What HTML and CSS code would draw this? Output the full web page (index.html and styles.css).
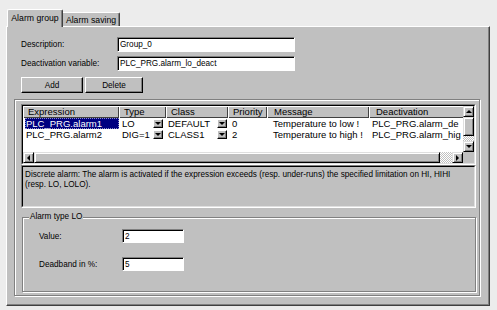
FILE: index.html
```html
<!DOCTYPE html>
<html>
<head>
<meta charset="utf-8">
<link rel="stylesheet" href="styles.css">
</head>
<body>
<div class="window">
  <div class="tabs">
    <div class="tab active">Alarm group</div>
    <div class="tab inactive">Alarm saving</div>
  </div>
  <div class="panel">
    <div class="form">
      <span class="label">Description:</span>
      <input class="field wide" value="Group_0">
      <span class="label">Deactivation variable:</span>
      <input class="field wide" value="PLC_PRG.alarm_lo_deact">
    </div>
    <div class="buttons">
      <button class="btn add">Add</button>
      <button class="btn del">Delete</button>
    </div>
    <div class="etched">
      <div class="list">
        <div class="list-inner">
          <div class="list-content">
            <div class="row header">
              <div class="hcell">Expression</div>
              <div class="hcell">Type</div>
              <div class="hcell">Class</div>
              <div class="hcell">Priority</div>
              <div class="hcell msg">Message</div>
              <div class="hcell msg">Deactivation</div>
            </div>
            <div class="row">
              <div class="cell expr"><span class="sel">PLC_PRG.alarm1</span></div>
              <div class="cell combo type"><span>LO</span><span class="drop"></span></div>
              <div class="cell combo cls"><span>DEFAULT</span><span class="drop"></span></div>
              <div class="cell prio">0</div>
              <div class="cell msgc">Temperature to low !</div>
              <div class="cell deact">PLC_PRG.alarm_de</div>
            </div>
            <div class="row">
              <div class="cell expr"><span class="plain">PLC_PRG.alarm2</span></div>
              <div class="cell combo type"><span>DIG=1</span><span class="drop"></span></div>
              <div class="cell combo cls"><span>CLASS1</span><span class="drop"></span></div>
              <div class="cell prio">2</div>
              <div class="cell msgc">Temperature to high !</div>
              <div class="cell deact">PLC_PRG.alarm_hig</div>
            </div>
          </div>
          <div class="vscroll">
            <div class="sbtn"><span class="arr up"></span></div>
            <div class="vthumb"></div>
            <div class="track"></div>
            <div class="sbtn"><span class="arr down"></span></div>
          </div>
          <div class="hscroll">
            <div class="sbtn"><span class="arr left"></span></div>
            <div class="hthumb"></div>
            <div class="track"></div>
            <div class="sbtn"><span class="arr right"></span></div>
          </div>
          <div class="corner"></div>
        </div>
      </div>
      <div class="desc">
        <div class="desc-inner">Discrete alarm: The alarm is activated if the expression exceeds (resp. under-runs) the specified limitation on HI, HIHI<br>(resp. LO, LOLO).</div>
      </div>
      <div class="group">
        <span class="group-title">Alarm type LO</span>
        <div class="group-form">
          <span class="label">Value:</span>
          <input class="field small" value="2">
          <span class="label">Deadband in %:</span>
          <input class="field small" value="5">
        </div>
      </div>
    </div>
  </div>
</div>
</body>
</html>
```
FILE: styles.css
```css
* { box-sizing: border-box; }

body {
  margin: 0;
  width: 497px;
  height: 310px;
  overflow: hidden;
  background: #ececec;
  font-family: "Liberation Sans", Arial, sans-serif;
  font-size: 8.2px;
  color: #000;
}

.window {
  padding: 9px 0 0 6px;
}

.tabs {
  display: flex;
  align-items: flex-end;
  height: 17px;
  padding-left: 1px;
  position: relative;
  z-index: 1;
}

.tab {
  background: #c0c0c0;
  display: flex;
  align-items: center;
  justify-content: center;
  font-size: 8.7px;
  border-top: 1px solid #fff;
  border-right: 1px solid #404040;
  box-shadow: inset -1px 0 0 #808080;
}

.tab.active {
  width: 56px;
  height: 18px;
  margin-bottom: -1px;
  border-left: 1px solid #fff;
  border-radius: 2px 2px 0 0;
  padding-bottom: 1px;
}

.tab.inactive {
  width: 57px;
  height: 14px;
  border-radius: 0 2px 0 0;
  padding-top: 1px;
}

.panel {
  width: 484px;
  height: 280px;
  background: #c0c0c0;
  border: 1px solid;
  border-color: #fff #404040 #404040 #fff;
  box-shadow: inset -1px -1px 0 #808080;
  padding: 10px 0 0 14px;
}

.form {
  display: grid;
  grid-template-columns: 96px 178px;
  row-gap: 4px;
  align-items: center;
}

.field {
  font: inherit;
  margin: 0;
  height: 15px;
  padding: 0 2px;
  background: #fff;
  color: #000;
  border: 1px solid;
  border-color: #808080 #fff #fff #808080;
  box-shadow: inset 1px 1px 0 #000;
  outline: none;
}

.field.wide { width: 178px; }
.field.small { width: 62px; height: 14px; }

.buttons {
  display: flex;
  gap: 2px;
  margin-top: 6px;
}

.btn {
  font: inherit;
  margin: 0;
  padding: 0;
  height: 16px;
  background: #c0c0c0;
  color: #000;
  border: 1px solid;
  border-color: #fff #000 #000 #fff;
  box-shadow: inset -1px -1px 0 #808080;
}

.btn.add { width: 62px; }
.btn.del { width: 58px; }

.etched {
  margin: 6px 0 0 -7px;
  width: 466px;
  height: 197px;
  border: 1px solid #808080;
  box-shadow: inset 1px 1px 0 #fff, 1px 1px 0 #fff;
  padding: 4px 0 0 6px;
}

.list, .desc {
  width: 455px;
  border: 1px solid;
  border-color: #808080 #fff #fff #808080;
}

.list { height: 61px; }

.list-inner {
  height: 100%;
  border: 1px solid;
  border-color: #000 #dfdfdf #dfdfdf #000;
  display: grid;
  grid-template-columns: 440px 11px;
  grid-template-rows: 46px 11px;
  background: #fff;
  font-size: 9.5px;
}

.list-content {
  overflow: hidden;
  background: #fff;
}

.row {
  display: grid;
  grid-template-columns: 96px 47px 62px 39px 102px 120px;
  white-space: nowrap;
}

.hcell {
  height: 12px;
  line-height: 12px;
  background: #c0c0c0;
  padding-left: 5px;
  box-shadow: inset 1px 1px 0 #fff, inset -1px -1px 0 #404040;
  overflow: hidden;
}

.hcell.msg { padding-left: 7px; }

.cell {
  height: 11px;
  line-height: 11px;
  overflow: hidden;
}

.cell.expr { padding-left: 2px; }
.sel {
  display: block;
  background: #000080;
  color: #fff;
  padding-left: 1px;
  outline: 1px dotted #9090c8;
  outline-offset: -1px;
}
.plain { display: block; padding-left: 1px; }

.combo {
  display: flex;
  align-items: center;
  justify-content: space-between;
  padding-left: 3px;
}

.combo.type { padding-right: 3px; }
.combo.cls { padding-left: 2px; padding-right: 1px; }

.drop {
  width: 10px;
  height: 9px;
  background: #c0c0c0;
  border: 1px solid;
  border-color: #fff #000 #000 #fff;
  box-shadow: inset -1px -1px 0 #808080;
  display: flex;
  align-items: center;
  justify-content: center;
}

.drop::after {
  content: "";
  border-left: 3px solid transparent;
  border-right: 3px solid transparent;
  border-top: 3px solid #000;
}

.cell.prio { padding-left: 4px; }
.cell.msgc { padding-left: 6px; }
.cell.deact { padding-left: 3px; }

.vscroll {
  display: flex;
  flex-direction: column;
  background: #c0c0c0;
}

.hscroll {
  display: flex;
  background: #c0c0c0;
}

.sbtn {
  flex: none;
  width: 11px;
  height: 11px;
  background: #c0c0c0;
  border: 1px solid;
  border-color: #dfdfdf #000 #000 #dfdfdf;
  box-shadow: inset 1px 1px 0 #fff, inset -1px -1px 0 #808080;
  display: flex;
  align-items: center;
  justify-content: center;
}

.arr { width: 0; height: 0; }
.arr.up { border-left: 3px solid transparent; border-right: 3px solid transparent; border-bottom: 3px solid #000; }
.arr.down { border-left: 3px solid transparent; border-right: 3px solid transparent; border-top: 3px solid #000; }
.arr.left { border-top: 3px solid transparent; border-bottom: 3px solid transparent; border-right: 3px solid #000; }
.arr.right { border-top: 3px solid transparent; border-bottom: 3px solid transparent; border-left: 3px solid #000; }

.vthumb, .hthumb {
  flex: none;
  background: #c0c0c0;
  border: 1px solid;
  border-color: #dfdfdf #000 #000 #dfdfdf;
  box-shadow: inset 1px 1px 0 #fff, inset -1px -1px 0 #808080;
}

.vthumb { height: 19px; }
.hthumb { width: 406px; }

.track {
  flex: 1;
  background-color: #c0c0c0;
  background-image: repeating-conic-gradient(#fff 0 25%, #c0c0c0 0 50%);
  background-size: 2px 2px;
}

.corner { background: #c0c0c0; }

.desc {
  height: 43px;
}

.desc-inner {
  height: 100%;
  border: 1px solid;
  border-color: #000 #dfdfdf #dfdfdf #000;
  padding: 3px 0 0 2px;
  line-height: 10px;
  white-space: nowrap;
}

.group {
  position: relative;
  margin: 9px 0 0 1px;
  width: 454px;
  height: 75px;
  border: 1px solid #808080;
  box-shadow: inset 1px 1px 0 #fff, 1px 1px 0 #fff;
  padding: 11px 0 0 16px;
}

.group-title {
  position: absolute;
  top: -6px;
  left: 6px;
  padding: 0 1px;
  line-height: 10px;
  background: #c0c0c0;
}

.group-form {
  display: grid;
  grid-template-columns: 83px 62px;
  row-gap: 14px;
  align-items: center;
}
```
